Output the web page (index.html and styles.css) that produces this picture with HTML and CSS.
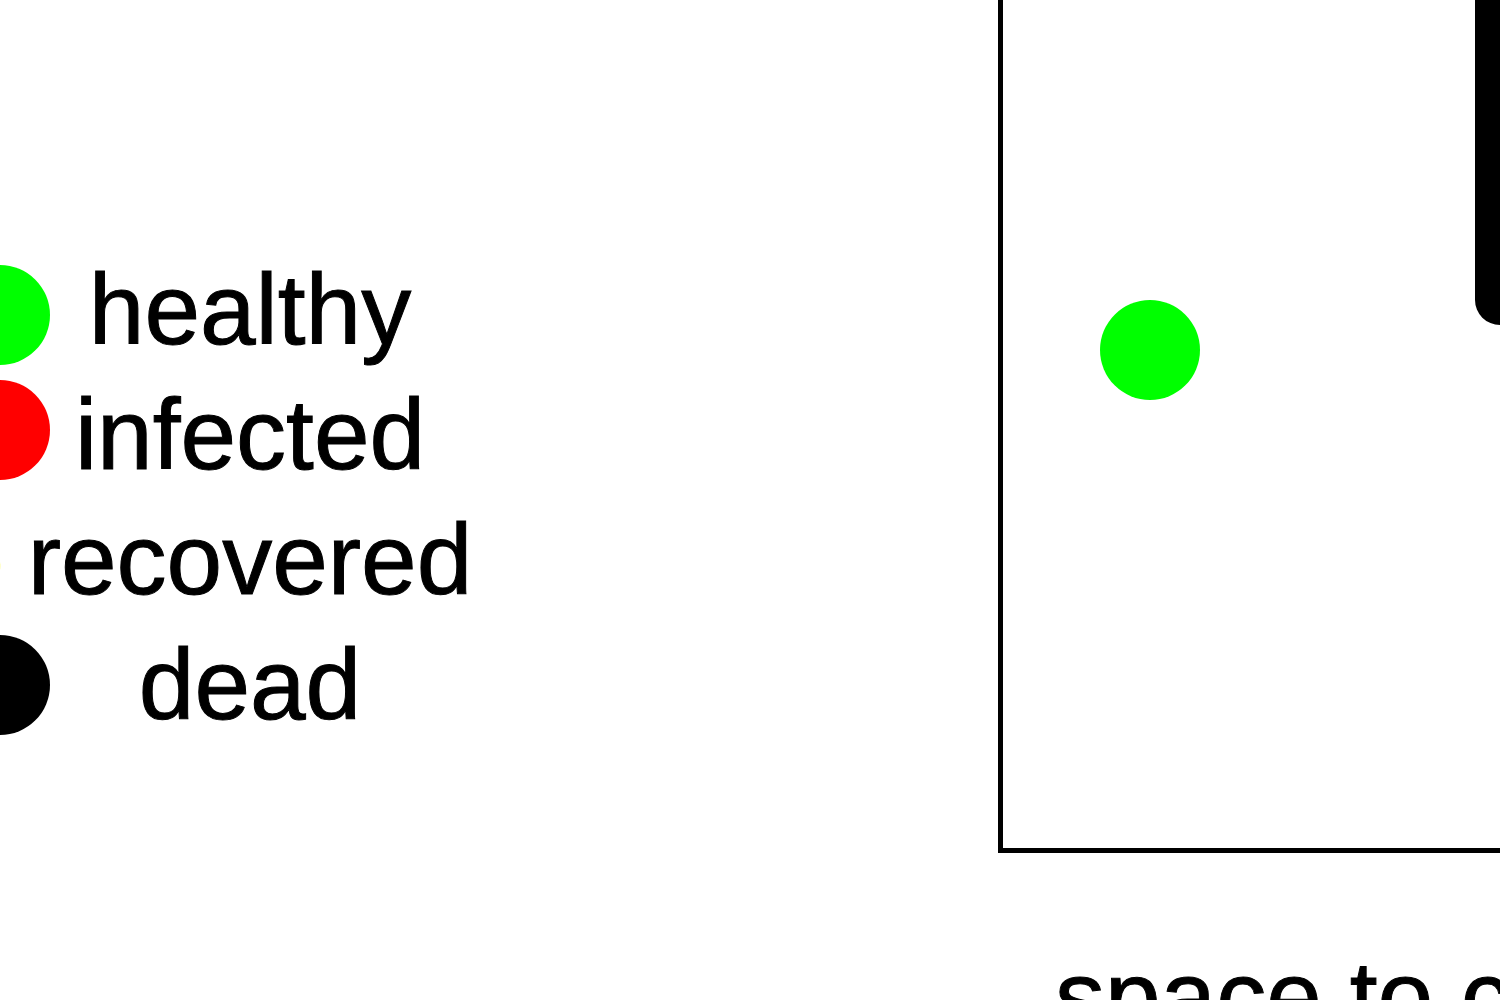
FILE: index.html
```html
<!DOCTYPE html>
<html lang="en">
<head>
<meta charset="utf-8">
<meta name="viewport" content="width=device-width, initial-scale=1">
<title>Infection simulation</title>
<link rel="stylesheet" href="styles.css">
</head>
<body>
<main class="simulation">
  <section class="legend">
    <svg class="markers" width="50" height="500" viewBox="0 0 50 500" aria-hidden="true">
      <circle class="healthy" cx="0" cy="68" r="50"/>
      <circle class="infected" cx="0" cy="183" r="50"/>
      <circle class="recovered" cx="-49.8" cy="319" r="50"/>
      <circle class="dead" cx="0" cy="438" r="50"/>
    </svg>
    <ul class="labels">
      <li class="label">healthy</li>
      <li class="label">infected</li>
      <li class="label">recovered</li>
      <li class="label">dead</li>
    </ul>
  </section>
  <section class="world">
    <div class="arena">
      <span class="wall"></span>
      <span class="person"></span>
    </div>
    <p class="hint">space to cough</p>
  </section>
</main>
</body>
</html>
```

FILE: styles.css
```css
* {
  box-sizing: border-box;
}

body {
  margin: 0;
  background: #fff;
  color: #000;
  font-family: "Liberation Sans", Arial, sans-serif;
  font-size: 100px;
  line-height: 125px;
  -webkit-text-stroke: 1px #000;
}

.simulation {
  display: grid;
  grid-template-columns: 2fr 1fr;
  height: 100vh;
  overflow: hidden;
}

.legend {
  display: flex;
  align-items: flex-start;
  padding-top: 247px;
}

.markers {
  flex: none;
}

.healthy {
  fill: #0f0;
}

.infected {
  fill: #f00;
}

.recovered {
  fill: #ff0;
}

.dead {
  fill: #000;
}

.labels {
  width: 400px;
  margin: 0;
  padding: 0;
  list-style: none;
}

.label {
  display: flex;
  justify-content: center;
  white-space: nowrap;
}

.world {
  min-width: 0;
}

.arena {
  position: relative;
  height: 853px;
  margin: 0 -20px 0 -2px;
  border: solid #000;
  border-width: 0 0 5px 5px;
}

.wall {
  position: absolute;
  top: -50px;
  left: 472px;
  width: 100px;
  height: 375px;
  border-radius: 25px;
  background: #000;
}

.person {
  position: absolute;
  top: 300px;
  left: 97px;
  width: 100px;
  height: 100px;
  border-radius: 50%;
  background: #0f0;
}

.hint {
  margin: 81px 0 0 55px;
  white-space: nowrap;
}
```
